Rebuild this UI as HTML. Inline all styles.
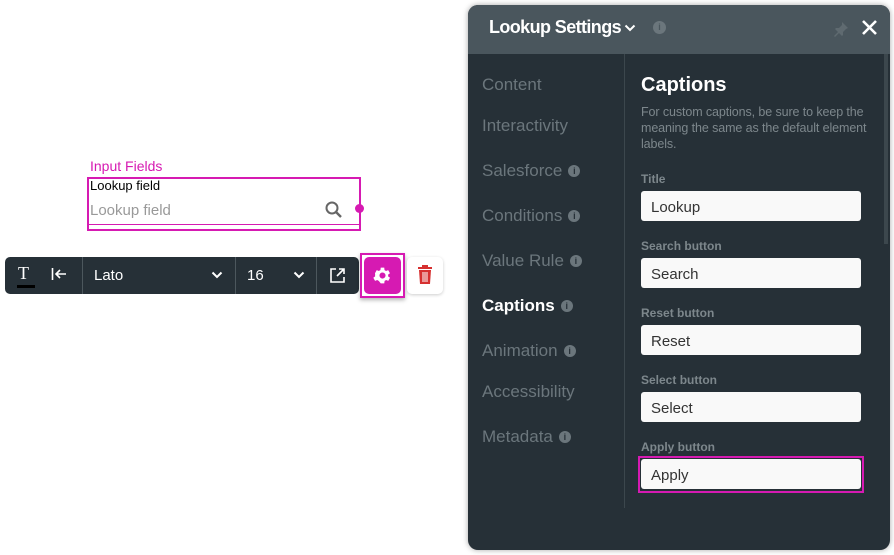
<!DOCTYPE html>
<html><head><style>
*{margin:0;padding:0;box-sizing:border-box}
body{width:894px;height:555px;background:#fff;font-family:"Liberation Sans",sans-serif;position:relative;overflow:hidden}
.a{position:absolute}
.nav{position:absolute;left:14px;font-size:17px;color:#6b767c}
.i{display:inline-block;width:12px;height:12px;border-radius:50%;background:#6b767c;color:#263037;font-size:9px;text-align:center;line-height:12px;font-weight:bold;margin-left:6px;vertical-align:2px}
.lab{position:absolute;left:173px;font-size:12px;color:#7d878c;font-weight:bold}
.inp{position:absolute;left:173px;width:220px;height:30px;background:#f9f9f9;border-radius:3px;font-size:15px;color:#333;padding:8px 10px}
</style></head><body>
<div class="a" style="left:90px;top:158px;font-size:14px;color:#d61ab2">Input Fields</div>
<div class="a" style="left:87px;top:177px;width:274px;height:54px;border:2px solid #d61ab2"></div>
<div class="a" style="left:90px;top:178px;font-size:13px;color:#000">Lookup field</div>
<div class="a" style="left:90px;top:202px;font-size:15px;color:#999">Lookup field</div>
<div class="a" style="left:89px;top:224px;width:270px;height:1px;background:#d61ab2"></div>
<svg class="a" style="left:324px;top:200px" width="20" height="20" viewBox="0 0 20 20"><circle cx="8" cy="8" r="5.5" fill="none" stroke="#666" stroke-width="2"/><path d="M12 12l5 5" stroke="#666" stroke-width="2.4"/></svg>
<div class="a" style="left:355px;top:204px;width:9px;height:9px;border-radius:50%;background:#d61ab2"></div>
<div class="a" style="left:5px;top:257px;width:354px;height:37px;background:#263037;border-radius:5px;color:#fff"></div>
<div class="a" style="left:18px;top:263px;color:#fff;font-size:18px;font-family:'Liberation Serif',serif">T</div>
<div class="a" style="left:17px;top:285px;width:18px;height:3px;background:#000"></div>
<svg class="a" style="left:51px;top:267px" width="16" height="14" viewBox="0 0 16 14"><path d="M1.5 1v12M15 7H5M9 3L5 7l4 4" fill="none" stroke="#fff" stroke-width="1.6"/></svg>
<div class="a" style="left:82px;top:257px;width:1px;height:37px;background:#4c575d"></div>
<div class="a" style="left:94px;top:267px;color:#fff;font-size:15px">Lato</div>
<svg class="a" style="left:211px;top:271px" width="12" height="8" viewBox="0 0 12 8"><path d="M1.5 1.5L6 6l4.5-4.5" fill="none" stroke="#fff" stroke-width="2"/></svg>
<div class="a" style="left:235px;top:257px;width:1px;height:37px;background:#4c575d"></div>
<div class="a" style="left:247px;top:267px;color:#fff;font-size:15px">16</div>
<svg class="a" style="left:293px;top:271px" width="12" height="8" viewBox="0 0 12 8"><path d="M1.5 1.5L6 6l4.5-4.5" fill="none" stroke="#fff" stroke-width="2"/></svg>
<div class="a" style="left:316px;top:257px;width:1px;height:37px;background:#4c575d"></div>
<svg class="a" style="left:329px;top:267px" width="17" height="17" viewBox="0 0 17 17"><path d="M7 2H2v13h13v-5M10 2h5v5M15 2L8 9" fill="none" stroke="#fff" stroke-width="1.6"/></svg>
<div class="a" style="left:360px;top:253px;width:45px;height:45px;border:2px solid #d61ab2;box-shadow:0 2px 4px rgba(0,0,0,.3)"></div>
<div class="a" style="left:364px;top:257px;width:37px;height:37px;background:#d61ab2;border-radius:5px"></div>
<svg class="a" style="left:372px;top:265px" width="21" height="21" viewBox="0 0 24 24"><path fill="#fff" d="M19.4 13a7.5 7.5 0 000-2l2.1-1.6-2-3.5-2.5 1a7 7 0 00-1.7-1L15 3h-4l-.4 2.9a7 7 0 00-1.7 1l-2.5-1-2 3.5L4.6 11a7.5 7.5 0 000 2l-2.1 1.6 2 3.5 2.5-1a7 7 0 001.7 1L11 21h4l.4-2.9a7 7 0 001.7-1l2.5 1 2-3.5zM13 15.5a3.5 3.5 0 110-7 3.5 3.5 0 010 7z" transform="translate(-1 0)"/></svg>
<div class="a" style="left:407px;top:257px;width:36px;height:37px;background:#fff;border-radius:5px;box-shadow:0 1px 3px rgba(0,0,0,.2)"></div>
<svg class="a" style="left:416px;top:265px" width="18" height="20" viewBox="0 0 18 20"><rect x="2" y="2" width="14" height="2" fill="#d63030"/><rect x="6" y="0" width="6" height="3" fill="#d63030"/><path d="M3 5h12l-1 14H4z" fill="#d63030"/><path d="M7 7v10M9 7v10M11 7v10" stroke="#fff" stroke-width="1"/></svg>

<div class="a" style="left:468px;top:5px;width:422px;height:545px;background:#263037;border-radius:10px;box-shadow:0 0 6px rgba(0,0,0,.35);overflow:hidden">
 <div class="a" style="left:0;top:0;width:422px;height:49px;background:#4a565d"></div>
 <div class="a" style="left:21px;top:12px;color:#fff;font-size:18px;font-weight:bold;letter-spacing:-0.6px">Lookup Settings</div>
 <svg class="a" style="left:156px;top:19px" width="12" height="8" viewBox="0 0 12 8"><path d="M1.5 1.5L6 6l4.5-4.5" fill="none" stroke="#fff" stroke-width="2"/></svg>
 <div class="a" style="left:185px;top:16px;width:13px;height:13px;border-radius:50%;background:#6b767c;color:#4a565d;font-size:9px;text-align:center;line-height:13px;font-weight:bold">i</div>
 <svg class="a" style="left:365px;top:16px" width="16" height="16" viewBox="0 0 16 16"><path d="M9 1l6 6-2 1-3 3 0 3-1 1-3-3-4 4-1-1 4-4-3-3 1-1 3 0 3-3z" fill="#5f6a70"/></svg>
 <svg class="a" style="left:393px;top:14px" width="17" height="17" viewBox="0 0 17 17"><path d="M2 2l13 13M15 2L2 15" stroke="#fff" stroke-width="2.6"/></svg>
 <div class="a" style="left:156px;top:49px;width:1px;height:454px;background:#3c474d"></div>
 <div class="a" style="left:416px;top:49px;width:4px;height:190px;background:#3c474d"></div>
 <div class="nav" style="top:70px">Content</div>
 <div class="nav" style="top:111px">Interactivity</div>
 <div class="nav" style="top:156px">Salesforce<span class="i">i</span></div>
 <div class="nav" style="top:201px">Conditions<span class="i">i</span></div>
 <div class="nav" style="top:246px">Value Rule<span class="i">i</span></div>
 <div class="nav" style="top:291px;color:#fff;font-weight:bold">Captions<span class="i">i</span></div>
 <div class="nav" style="top:336px">Animation<span class="i">i</span></div>
 <div class="nav" style="top:377px">Accessibility</div>
 <div class="nav" style="top:422px">Metadata<span class="i">i</span></div>
 <div class="a" style="left:173px;top:69px;color:#fff;font-size:20px;font-weight:bold">Captions</div>
 <div class="a" style="left:173px;top:99px;width:235px;color:#7d878c;font-size:12.5px;line-height:16px;letter-spacing:-0.1px">For custom captions, be sure to keep the meaning the same as the default element labels.</div>
 <div class="lab" style="top:167px">Title</div><div class="inp" style="top:186px">Lookup</div>
 <div class="lab" style="top:234px">Search button</div><div class="inp" style="top:253px">Search</div>
 <div class="lab" style="top:301px">Reset button</div><div class="inp" style="top:320px">Reset</div>
 <div class="lab" style="top:368px">Select button</div><div class="inp" style="top:387px">Select</div>
 <div class="lab" style="top:435px">Apply button</div>
 <div class="a" style="left:170px;top:451px;width:226px;height:37px;border:2px solid #d61ab2"></div>
 <div class="inp" style="top:454px;left:173px">Apply</div>
</div>
</body></html>
